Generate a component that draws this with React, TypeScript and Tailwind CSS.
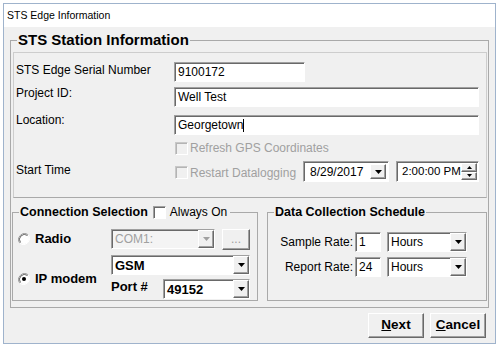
import React from "react";

const sunken =
  "border border-t-[#a0a0a0] border-l-[#a0a0a0] border-b-white border-r-white shadow-[inset_1px_1px_0_#696969]";
const raised =
  "border border-t-white border-l-white border-b-[#696969] border-r-[#696969] shadow-[inset_-1px_-1px_0_#a0a0a0]";

function Arrow({ color = "#000" }: { color?: string }) {
  return (
    <svg width="7" height="4" viewBox="0 0 7 4">
      <path d="M0 0h7L3.5 4z" fill={color} />
    </svg>
  );
}

function Combo({
  text,
  className,
  bold,
  disabled,
}: {
  text: string;
  className: string;
  bold?: boolean;
  disabled?: boolean;
}) {
  return (
    <div
      className={`${sunken} ${className} h-[20px] flex items-stretch ${
        disabled ? "bg-[#f4f4f4]" : "bg-white"
      }`}
    >
      <span
        className={`flex-1 pl-[3px] pt-[1px] leading-[17px] ${
          bold ? "font-bold text-[13px]" : "text-[12px]"
        } ${disabled ? "text-[#a0a0a0]" : "text-black"}`}
      >
        {text}
      </span>
      <div
        className={`${raised} w-[16px] bg-[#f0f0f0] flex items-center justify-center`}
      >
        <Arrow color={disabled ? "#a0a0a0" : "#000"} />
      </div>
    </div>
  );
}

function Check({ disabled }: { disabled?: boolean }) {
  return (
    <div
      className={`w-[13px] h-[13px] shrink-0 border ${
        disabled
          ? "border-t-[#c8c8c8] border-l-[#c8c8c8] border-b-white border-r-white bg-[#f0f0f0] shadow-[inset_1px_1px_0_#b4b4b4]"
          : "border-t-[#a0a0a0] border-l-[#a0a0a0] border-b-white border-r-white bg-white shadow-[inset_1px_1px_0_#696969]"
      }`}
    />
  );
}

function Radio({ checked }: { checked?: boolean }) {
  return (
    <svg width="12" height="12" viewBox="0 0 12 12" className="shrink-0">
      <circle cx="6" cy="6" r="5" fill="#fff" />
      <path d="M10.2 1.8A6 6 0 0 0 1.8 10.2" stroke="#a0a0a0" fill="none" />
      <path d="M9.5 2.5A5 5 0 0 0 2.5 9.5" stroke="#696969" fill="none" />
      <path d="M1.8 10.2A6 6 0 0 0 10.2 1.8" stroke="#fff" fill="none" />
      {checked && <circle cx="6" cy="6" r="2" fill="#000" />}
    </svg>
  );
}

function Field({ value, className, caret }: { value: string; className: string; caret?: boolean }) {
  return (
    <div className={`${sunken} ${className} h-[20px] bg-white pl-[3px] flex items-center text-[12px]`}>
      <span>{value}</span>
      {caret && <span className="w-[1px] h-[13px] bg-black" />}
    </div>
  );
}

export default function App() {
  return (
    <div className="w-[500px] h-[349px] bg-white pt-[3px] pl-[3px] font-['Liberation_Sans',Arial,sans-serif] text-[12px] text-black">
      <div className="w-[493px] h-[341px] border border-[#9fb3cc] flex flex-col">
        <div className="h-[23px] bg-white flex items-center pl-[3px] text-[10.5px]">
          STS Edge Information
        </div>
        <div className="flex-1 bg-[#f0f0f0] px-[6px] pt-[4px]">
          <fieldset className="h-[277px] border border-[#a9a9a9]">
            <legend className="ml-[6px] px-[1px] text-[15px] font-bold leading-[18px]">
              STS Station Information
            </legend>

            <div className="mt-[3px] ml-[2px] mr-[1px] h-[146px] border border-[#cdcdcd] border-b-[#a9a9a9] pl-[2px]">
              <div className="mt-[9px] flex items-start">
                <span className="w-[158px] leading-[14px] mt-[1px]">STS Edge Serial Number</span>
                <Field value="9100172" className="w-[131px]" />
              </div>
              <div className="mt-[5px] flex items-start">
                <span className="w-[158px] leading-[14px] -mt-[1px]">Project ID:</span>
                <Field value="Well Test" className="w-[305px]" />
              </div>
              <div className="mt-[8px] flex items-start">
                <span className="w-[158px] leading-[14px] -mt-[2px]">Location:</span>
                <Field value="Georgetown" className="w-[305px]" caret />
              </div>
              <div className="mt-[5px] h-[16px] flex items-center pl-[159px] gap-[2px] text-[#a0a0a0]">
                <Check disabled />
                <span>Refresh GPS Coordinates</span>
              </div>
              <div className="mt-[5px] flex items-start">
                <span className="w-[158px] leading-[14px] mt-[2px]">Start Time</span>
                <div className="w-[129px] h-[21px] flex items-center gap-[2px] pl-[1px] pt-[2px] text-[#a0a0a0]">
                  <Check disabled />
                  <span>Restart Datalogging</span>
                </div>
                <div className={`${sunken} w-[86px] h-[21px] bg-white flex items-center`}>
                  <span className="flex-1 pl-[6px] whitespace-nowrap">8/29/2017</span>
                  <div className={`${raised} w-[16px] h-[15px] mr-[2px] bg-[#f0f0f0] flex items-center justify-center`}>
                    <Arrow />
                  </div>
                </div>
                <div className={`${sunken} ml-[7px] w-[83px] h-[21px] bg-white flex items-center`}>
                  <span className="flex-1 pl-[5px] whitespace-nowrap text-[11.5px]">2:00:00 PM</span>
                  <div className="w-[16px] h-[17px] mr-[1px] shrink-0 flex flex-col">
                    <div className={`${raised} flex-1 bg-[#f0f0f0] flex items-center justify-center`}>
                      <svg width="5" height="3" viewBox="0 0 5 3">
                        <path d="M0 3h5L2.5 0z" fill="#000" />
                      </svg>
                    </div>
                    <div className={`${raised} flex-1 bg-[#f0f0f0] flex items-center justify-center`}>
                      <svg width="5" height="3" viewBox="0 0 5 3">
                        <path d="M0 0h5L2.5 3z" fill="#000" />
                      </svg>
                    </div>
                  </div>
                </div>
              </div>
            </div>

            <div className="mt-[6px] ml-[1px] flex gap-[9px]">
              <fieldset className="w-[246px] h-[97px] border border-[#a9a9a9]">
                <legend className="ml-[6px] px-[1px] leading-[16px] flex items-center">
                  <span className="font-bold text-[12.5px]">Connection Selection</span>
                  <span className="ml-[5px]">
                    <Check />
                  </span>
                  <span className="ml-[4px] pr-[2px]">Always On</span>
                </legend>
                <div className="flex">
                  <div className="w-[98px] pl-[5px]">
                    <div className="mt-[9px] h-[20px] flex items-center gap-[5px]">
                      <Radio />
                      <span className="font-bold text-[13px]">Radio</span>
                    </div>
                    <div className="mt-[20px] h-[20px] flex items-center gap-[5px]">
                      <Radio checked />
                      <span className="font-bold text-[13px]">IP modem</span>
                    </div>
                  </div>
                  <div className="w-[139px]">
                    <div className="mt-[9px] flex items-start">
                      <Combo text="COM1:" className="w-[104px]" disabled />
                      <div className={`${raised} ml-[7px] w-[28px] h-[21px] bg-[#f0f0f0] flex items-center justify-center text-[#a0a0a0] leading-none pb-[2px]`}>
                        ...
                      </div>
                    </div>
                    <Combo text="GSM" className="mt-[5px] w-[139px]" bold />
                    <div className="mt-[4px] flex items-start">
                      <span className="w-[52px] font-bold text-[13px] leading-[16px]">Port #</span>
                      <Combo text="49152" className="w-[87px]" bold />
                    </div>
                  </div>
                </div>
              </fieldset>

              <fieldset className="w-[220px] h-[97px] border border-[#a9a9a9]">
                <legend className="ml-[6px] px-[1px] leading-[16px] font-bold text-[12.5px]">
                  Data Collection Schedule
                </legend>
                <div className="mt-[12px] flex items-center">
                  <span className="w-[85px] text-right">Sample Rate:</span>
                  <Field value="1" className="ml-[2px] w-[26px]" />
                  <Combo text="Hours" className="ml-[6px] w-[80px]" />
                </div>
                <div className="mt-[5px] flex items-center">
                  <span className="w-[85px] text-right">Report Rate:</span>
                  <Field value="24" className="ml-[2px] w-[26px]" />
                  <Combo text="Hours" className="ml-[6px] w-[80px]" />
                </div>
              </fieldset>
            </div>
          </fieldset>

          <div className="mt-[5px] mr-[3px] flex justify-end gap-[6px]">
            <button
              type="button"
              className={`${raised} w-[56px] h-[25px] bg-[#f0f0f0] font-bold text-[13.5px]`}
            >
              <span className="underline">N</span>ext
            </button>
            <button
              type="button"
              className={`${raised} w-[56px] h-[25px] bg-[#f0f0f0] font-bold text-[13.5px]`}
            >
              <span className="underline">C</span>ancel
            </button>
          </div>
        </div>
      </div>
    </div>
  );
}
